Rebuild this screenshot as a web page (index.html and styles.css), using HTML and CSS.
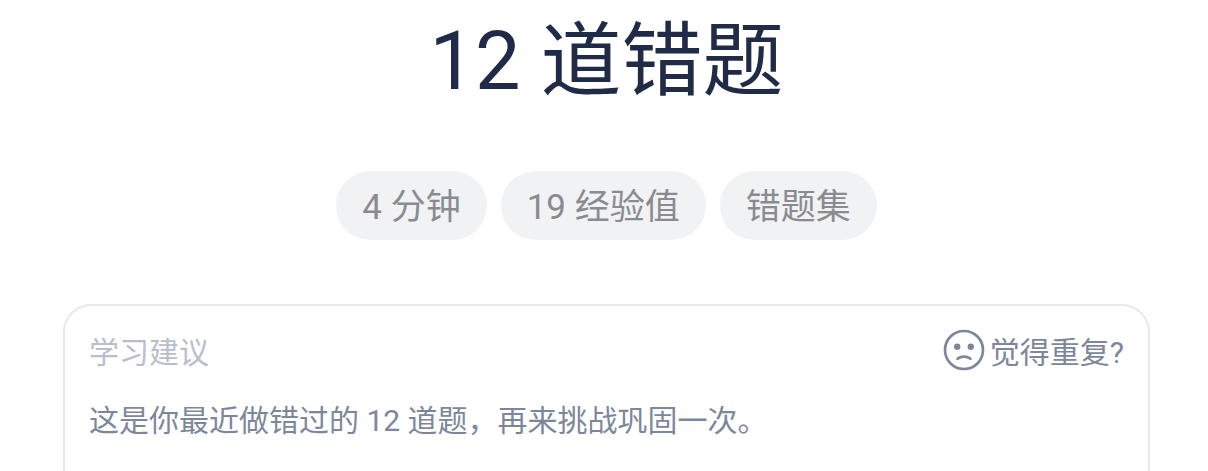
FILE: index.html
```html
<!DOCTYPE html>
<html lang="zh-CN">
<head>
<meta charset="utf-8">
<meta name="viewport" content="width=device-width, initial-scale=1">
<title>12 道错题</title>
<link rel="stylesheet" href="styles.css">
</head>
<body>
<main class="page">
  <h1 class="title">12 道错题</h1>
  <ul class="tags">
    <li class="tag">4 分钟</li>
    <li class="tag">19 经验值</li>
    <li class="tag">错题集</li>
  </ul>
  <section class="card">
    <header class="card-head">
      <h2 class="card-title">学习建议</h2>
      <button class="feedback" type="button">
        <svg class="face" viewBox="0 0 42 42" aria-hidden="true">
          <circle cx="21" cy="21" r="19" fill="none" stroke="currentColor" stroke-width="2.700"/>
          <circle cx="14.200" cy="17.700" r="3.200" fill="currentColor"/>
          <circle cx="27.800" cy="17.700" r="3.200" fill="currentColor"/>
          <path d="M14.500 29.700C18 26.800 24 26.800 27.500 29.700" fill="none" stroke="currentColor" stroke-width="2.700" stroke-linecap="round"/>
        </svg>
        <span class="feedback-label">觉得重复?</span>
      </button>
    </header>
    <p class="advice">这是你最近做错过的 12 道题，再来挑战巩固一次。</p>
  </section>
</main>
</body>
</html>
```
FILE: styles.css
```css
* {
  box-sizing: border-box;
}

html {
  background: #fff;
}

body {
  margin: 0;
  font-family: Roboto, "Noto Sans CJK SC", sans-serif;
}

.page {
  display: flex;
  flex-direction: column;
  min-height: 100vh;
  padding: 0 58px 0 63px;
}

.title {
  margin: 0;
  padding-top: 14px;
  font-size: 81px;
  font-weight: 400;
  line-height: 96px;
  text-align: center;
  color: #202b47;
}

.tags {
  display: flex;
  justify-content: center;
  gap: 14px;
  margin: 61px 0 0;
  padding: 0;
  list-style: none;
}

.tag {
  padding: 5px 26px 0;
  border-radius: 35px;
  background: #f1f2f4;
  color: #8a8b90;
  font-size: 35px;
  line-height: 64px;
}

.card {
  flex: 1;
  margin-top: 64px;
  padding: 17px 24px 0;
  border: 2px solid #e6e8ee;
  border-bottom: 0;
  border-radius: 28px 28px 0 0;
}

.card-head {
  display: flex;
  align-items: center;
  justify-content: space-between;
}

.card-title {
  margin: 0;
  padding-top: 6px;
  font-size: 30px;
  font-weight: 400;
  line-height: 48px;
  color: #b9becb;
}

.feedback {
  display: flex;
  align-items: center;
  gap: 5px;
  padding: 0;
  border: 0;
  background: none;
  font: inherit;
  font-size: 30px;
  line-height: 48px;
  color: #7d879c;
}

.feedback-label {
  padding-top: 6px;
}

.face {
  width: 42px;
  height: 42px;
}

.advice {
  margin: 20px 0 0;
  font-size: 30px;
  line-height: 48px;
  color: #7d879c;
}
```
